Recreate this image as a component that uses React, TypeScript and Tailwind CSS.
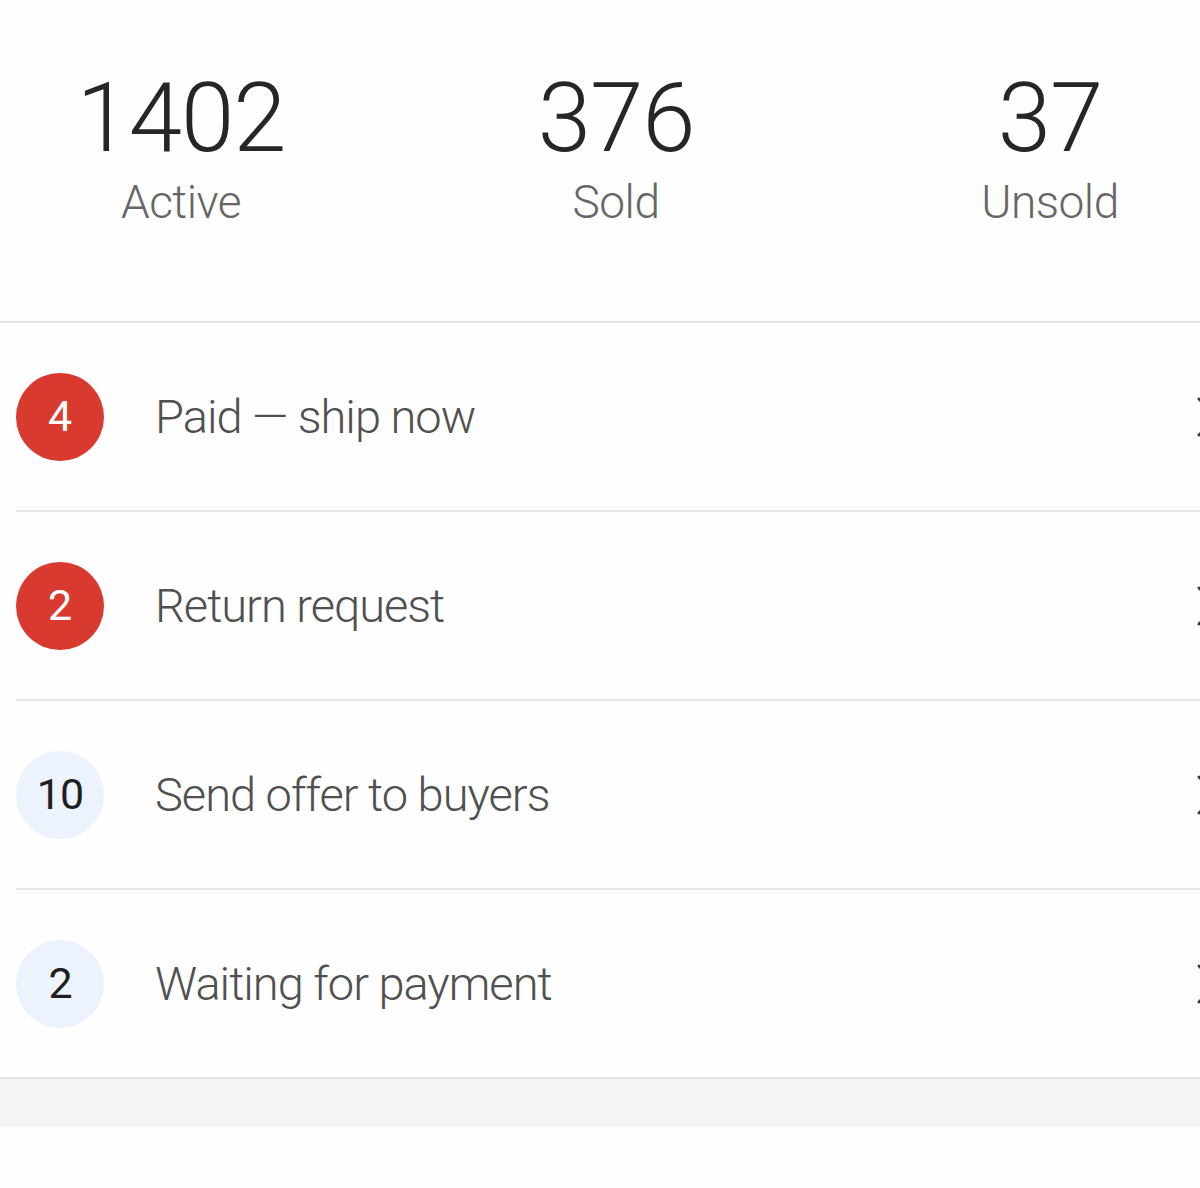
const stats = [
  { value: '1402', label: 'Active' },
  { value: '376', label: 'Sold' },
  { value: '37', label: 'Unsold' },
]

const tasks = [
  { count: 4, label: 'Paid — ship now', urgent: true },
  { count: 2, label: 'Return request', urgent: true },
  { count: 10, label: 'Send offer to buyers', urgent: false },
  { count: 2, label: 'Waiting for payment', urgent: false },
]

function Chevron() {
  return (
    <svg width="24" height="40" viewBox="0 0 24 40" fill="none" className="shrink-0 -mr-[20px]">
      <path d="M3 2 L21 20 L3 38" stroke="#3a3a3a" strokeWidth="3" strokeLinecap="round" strokeLinejoin="round" />
    </svg>
  )
}

export default function App() {
  return (
    <div className="w-[1200px] h-[1188px] overflow-hidden bg-[#fefefe] font-['Roboto','Liberation_Sans',sans-serif]">
      {/* Stats */}
      <div className="h-[321px] pt-[70px] grid grid-cols-[362px_508px_360px]">
        {stats.map((s) => (
          <div key={s.label} className="flex flex-col items-center">
            <div className="text-[96px] leading-none font-light text-[#262626] tracking-[-1px]">{s.value}</div>
            <div className="mt-[13px] text-[46px] leading-none font-light text-[#666666] tracking-[-0.5px]">{s.label}</div>
          </div>
        ))}
      </div>

      {/* Task list */}
      <div className="border-t-2 border-b-2 border-[#e4e4e4]">
        {tasks.map((t, i) => (
          <div key={t.label} className={i > 0 ? 'ml-4 border-t-2 border-[#e6e6e6]' : 'ml-4'}>
            <div className="h-[187px] flex items-center">
              <div
                className={
                  t.urgent
                    ? 'w-[88px] h-[88px] rounded-full bg-[#d93a30] text-white flex items-center justify-center text-[43px] leading-none'
                    : 'w-[88px] h-[88px] rounded-full bg-[#edf3fc] text-[#1f1f1f] flex items-center justify-center text-[43px] leading-none tracking-[-1px]'
                }
              >
                {t.count}
              </div>
              <div className="ml-[51px] flex-1 text-[47px] leading-none font-light text-[#505050] tracking-[-1px]">{t.label}</div>
              <Chevron />
            </div>
          </div>
        ))}
      </div>

      {/* Footer band */}
      <div className="h-[48px] bg-[#f5f4f2]" />
    </div>
  )
}
